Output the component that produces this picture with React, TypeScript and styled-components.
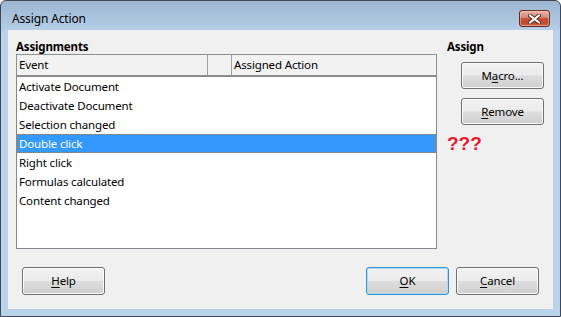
import styled, { createGlobalStyle } from 'styled-components';

const GlobalStyle = createGlobalStyle`
  html, body {
    margin: 0;
    padding: 0;
    background: #ffffff;
  }
  body {
    font-family: 'Segoe UI', 'Noto Sans', 'Open Sans', sans-serif;
    font-size: 11.5px;
    letter-spacing: -0.15px;
    color: #000;
  }
`;

const Window = styled.div`
  box-sizing: border-box;
  display: flex;
  flex-direction: column;
  width: 561px;
  height: 317px;
  padding: 0 7px 7px;
  border: 1px solid #3e4857;
  border-radius: 6px 6px 0 0;
  background: linear-gradient(to bottom, #9cb6d2 0px, #b6cee7 29px, #bad2ea 29px, #bad2ea 100%);
`;

const TitleBar = styled.div`
  display: flex;
  justify-content: space-between;
  align-items: flex-start;
  height: 29px;
  flex-shrink: 0;
`;

const Title = styled.div`
  margin: 10px 0 0 4px;
  font-size: 12px;
  line-height: 16px;
  color: #000;
`;

const CloseButton = styled.div`
  box-sizing: border-box;
  display: flex;
  align-items: center;
  justify-content: center;
  width: 31px;
  height: 17px;
  margin: 9px 3px 0 0;
  border: 1px solid #6a2b22;
  border-radius: 3px;
  background: linear-gradient(to bottom, #e9b2a5 0%, #d98b79 42%, #c4543b 50%, #c1462c 80%, #cf6b55 100%);
  box-shadow: inset 0 0 0 1px rgba(255, 210, 200, 0.45);
`;

const Client = styled.div`
  display: flex;
  flex-direction: column;
  flex: 1;
  background: #f0f0f0;
`;

const Main = styled.div`
  display: flex;
  padding: 9px 0 0 8px;
`;

const LeftPane = styled.div`
  width: 421px;
`;

const SectionLabel = styled.div`
  font-weight: bold;
  line-height: 15px;
  height: 15px;
`;

const Header = styled.div`
  box-sizing: border-box;
  display: flex;
  height: 22px;
  border: 1px solid #8e8f8f;
  background: #f2f2f2;
`;

const HeaderCell = styled.div<{ $w?: number; $last?: boolean }>`
  box-sizing: border-box;
  ${(p) => (p.$w ? `width: ${p.$w}px;` : 'flex: 1;')}
  padding-left: 2px;
  line-height: 19px;
  border-right: ${(p) => (p.$last ? 'none' : '1px solid #a0a0a0')};
  white-space: nowrap;
`;

const List = styled.div`
  box-sizing: border-box;
  height: 173px;
  border: 1px solid #828790;
  background: #ffffff;
`;

const Row = styled.div<{ $selected?: boolean }>`
  height: 17px;
  line-height: 17px;
  padding-left: 1px;
  border: 1px ${(p) => (p.$selected ? 'dotted #c8761f' : 'solid transparent')};
  background: ${(p) => (p.$selected ? '#3399ff' : 'transparent')};
  color: ${(p) => (p.$selected ? '#ffffff' : '#000000')};
  white-space: nowrap;
`;

const RightPane = styled.div`
  display: flex;
  flex-direction: column;
  margin-left: 10px;
`;

const SideButtons = styled.div`
  display: flex;
  flex-direction: column;
  gap: 9px;
  margin: 8px 0 0 14px;
`;

const Button = styled.div<{ $default?: boolean; $h?: number }>`
  box-sizing: border-box;
  display: flex;
  align-items: center;
  justify-content: center;
  width: 83px;
  height: ${(p) => p.$h ?? 27}px;
  border: 1px solid ${(p) => (p.$default ? '#3592d1' : '#707070')};
  border-radius: 3px;
  background: linear-gradient(to bottom, #f2f2f2 0%, #ebebeb 48%, #dddddd 52%, #cfcfcf 100%);
  box-shadow: inset 0 0 0 1px ${(p) => (p.$default ? '#a9dcf6' : '#fbfbfb')};
  color: #000;
  line-height: 16px;

  u {
    text-decoration: underline;
    text-underline-offset: 2px;
  }
`;

const Unknown = styled.div`
  margin-top: 8px;
  font-family: 'Liberation Sans', Arial, sans-serif;
  font-weight: bold;
  font-size: 19px;
  letter-spacing: 0;
  line-height: 21px;
  color: #e8192c;
`;

const Footer = styled.div`
  display: flex;
  justify-content: space-between;
  margin-top: 18px;
  padding: 0 14px 0 14px;
`;

const FooterGroup = styled.div`
  display: flex;
  gap: 7px;
`;

const events = [
  'Activate Document',
  'Deactivate Document',
  'Selection changed',
  'Double click',
  'Right click',
  'Formulas calculated',
  'Content changed',
];

function CloseGlyph() {
  return (
    <svg width="13" height="10" viewBox="0 0 13 10">
      <path d="M2 1.5 L11 8.5 M11 1.5 L2 8.5" stroke="#5a2a24" strokeWidth="4" strokeLinecap="square" />
      <path d="M2 1.5 L11 8.5 M11 1.5 L2 8.5" stroke="#ffffff" strokeWidth="2" strokeLinecap="square" />
    </svg>
  );
}

export default function App() {
  return (
    <>
      <GlobalStyle />
      <Window>
        <TitleBar>
          <Title>Assign Action</Title>
          <CloseButton>
            <CloseGlyph />
          </CloseButton>
        </TitleBar>
        <Client>
          <Main>
            <LeftPane>
              <SectionLabel>Assignments</SectionLabel>
              <Header>
                <HeaderCell $w={191}>Event</HeaderCell>
                <HeaderCell $w={24} />
                <HeaderCell $last>Assigned Action</HeaderCell>
              </Header>
              <List>
                {events.map((e) => (
                  <Row key={e} $selected={e === 'Double click'}>
                    {e}
                  </Row>
                ))}
              </List>
            </LeftPane>
            <RightPane>
              <SectionLabel>Assign</SectionLabel>
              <SideButtons>
                <Button>
                  <span>
                    M<u>a</u>cro...
                  </span>
                </Button>
                <Button>
                  <span>
                    <u>R</u>emove
                  </span>
                </Button>
              </SideButtons>
              <Unknown>???</Unknown>
            </RightPane>
          </Main>
          <Footer>
            <Button $h={28}>
              <span>
                <u>H</u>elp
              </span>
            </Button>
            <FooterGroup>
              <Button $h={28} $default>
                <span>
                  <u>O</u>K
                </span>
              </Button>
              <Button $h={28}>
                <span>
                  <u>C</u>ancel
                </span>
              </Button>
            </FooterGroup>
          </Footer>
        </Client>
      </Window>
    </>
  );
}
